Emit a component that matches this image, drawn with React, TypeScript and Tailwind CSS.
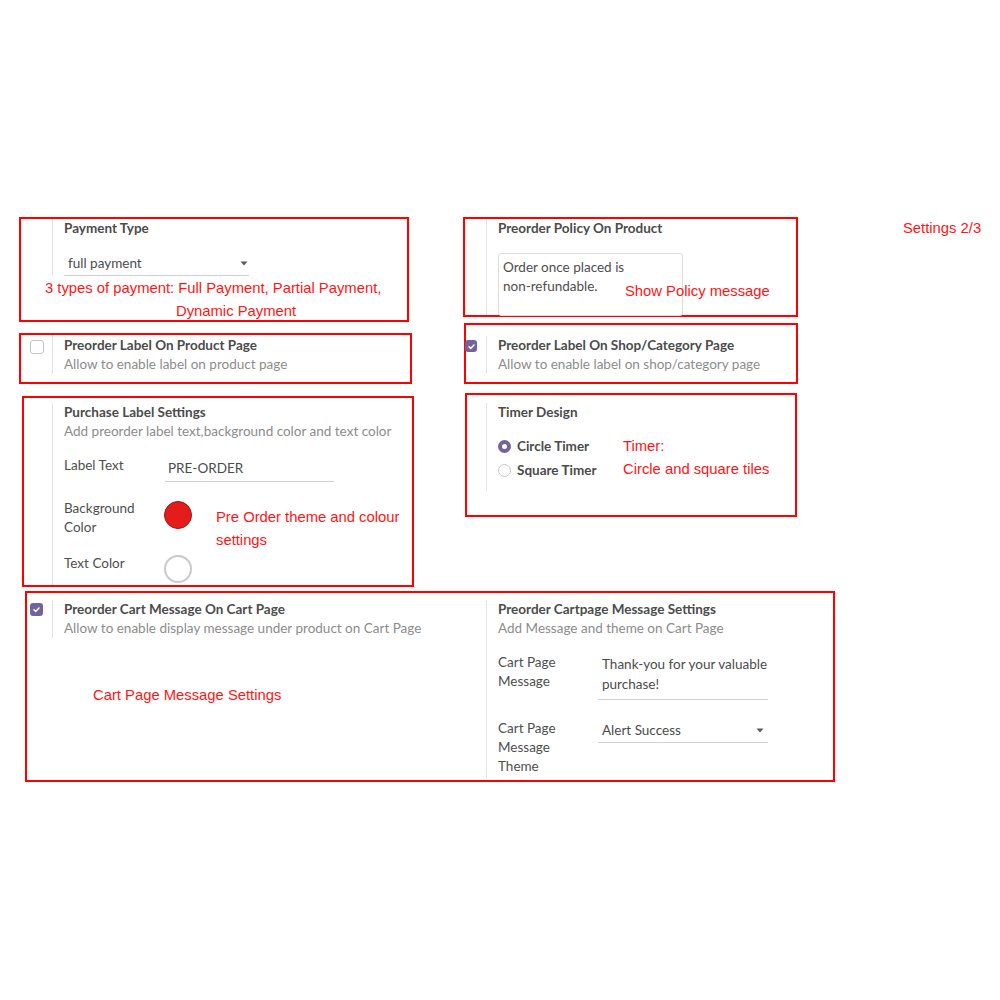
const title = 'text-[13.5px] leading-[19px] font-bold text-[#4b4b4b] whitespace-nowrap';
const desc = 'text-[13.5px] leading-[19px] text-[#8c8c8c] whitespace-nowrap';
const label = 'w-[82px] shrink-0 text-[13.5px] leading-[19px] text-[#4e4e4e]';
const note = "font-['Liberation_Sans',Arial,sans-serif] text-[14.8px] leading-[23px] text-[#ff1414] whitespace-nowrap";

function Caret() {
  return (
    <svg width="8" height="5" viewBox="0 0 8 5">
      <path d="M0.5 0.5h7L4 4.5z" fill="#5a5a5a" />
    </svg>
  );
}

function CheckBox({ checked, size = 13 }: { checked?: boolean; size?: number }) {
  if (!checked)
    return <div className="w-[14px] h-[14px] rounded-[3px] border border-[#c4c4c4] bg-white" />;
  return (
    <div
      className="rounded-[3px] bg-[#71639e] flex items-center justify-center"
      style={{ width: size, height: size }}
    >
      <svg width="9" height="9" viewBox="0 0 9 9">
        <path d="M2 4.7l1.7 1.7L7 3" stroke="#fff" strokeWidth="1.5" fill="none" strokeLinecap="round" strokeLinejoin="round" />
      </svg>
    </div>
  );
}

function Radio({ checked }: { checked?: boolean }) {
  return checked ? (
    <div className="w-[13px] h-[13px] rounded-full bg-[#71639e] flex items-center justify-center">
      <div className="w-[5px] h-[5px] rounded-full bg-white" />
    </div>
  ) : (
    <div className="w-[13px] h-[13px] rounded-full border border-[#c8c8c8] bg-white" />
  );
}

export default function App() {
  return (
    <div className="w-[1000px] min-h-[1000px] bg-white pt-[217px] font-['Lato',sans-serif]">
      {/* row 1 */}
      <div className="flex items-start">
        <div className="ml-[19px] w-[390px] h-[105px] border-2 border-[#ff0000] flex flex-col">
          <div className="flex">
            <div className="w-[31px] shrink-0" />
            <div className="border-l border-[#e3e3e3] pl-[11px]">
              <div className={title}>Payment Type</div>
              <div className="mt-[14px] w-[185px] h-[24px] border-b border-[#d2d2d2] flex items-center justify-between pl-[4px] pr-[1px] text-[13.5px] text-[#4b4b4b]">
                <span>full payment</span>
                <Caret />
              </div>
            </div>
          </div>
          <div className={`mt-px ${note}`}>
            <div className="pl-[24px]">3 types of payment: Full Payment, Partial Payment,</div>
            <div className="pl-[155px]">Dynamic Payment</div>
          </div>
        </div>

        <div className="relative ml-[54px] w-[335px] h-[100px] border-2 border-[#ff0000] flex">
          <div className="w-[21px] shrink-0" />
          <div className="border-l border-[#e3e3e3] pl-[11px] h-full">
            <div className={title}>Preorder Policy On Product</div>
            <div className="mt-[15px] w-[185px] h-[63px] border border-[#dcdcdc] rounded-[3px] px-[4px] pt-[4px] text-[13.5px] leading-[19px] text-[#4e4e4e]">
              Order once placed is
              <br />
              non-refundable.
            </div>
          </div>
          <div className={`absolute left-[160px] top-[61px] ${note}`}>Show Policy message</div>
        </div>

        <div className={`ml-[105px] ${note}`}>Settings 2/3</div>
      </div>

      {/* row 2 */}
      <div className="mt-px flex items-start">
        <div className="ml-[19px] mt-[10px] w-[393px] h-[51px] border-2 border-[#ff0000] flex">
          <div className="w-[31px] shrink-0 pl-[9px] pt-[5px]">
            <CheckBox />
          </div>
          <div className="border-l border-[#e3e3e3] pl-[11px] pt-px self-start">
            <div className={title}>Preorder Label On Product Page</div>
            <div className={desc}>Allow to enable label on product page</div>
          </div>
        </div>

        <div className="ml-[52px] w-[334px] h-[61px] border-2 border-[#ff0000] flex">
          <div className="relative z-10 w-[21px] shrink-0 -ml-px pt-[15px]">
            <CheckBox checked size={12} />
          </div>
          <div className="mt-[11px] border-l border-[#e3e3e3] pl-[11px] self-start">
            <div className={title}>Preorder Label On Shop/Category Page</div>
            <div className={desc}>Allow to enable label on shop/category page</div>
          </div>
        </div>
      </div>

      {/* row 3 */}
      <div className="mt-[9px] flex items-start">
        <div className="ml-[22px] mt-[3px] w-[392px] h-[191px] border-2 border-[#ff0000] flex">
          <div className="w-[28px] shrink-0" />
          <div className="mt-[5px] border-l border-[#e3e3e3] pl-[11px] flex-1">
            <div className={title}>Purchase Label Settings</div>
            <div className={desc}>Add preorder label text,background color and text color</div>

            <div className="mt-[15px] flex items-start">
              <div className={`${label} mr-[19px]`}>Label Text</div>
              <div className="w-[169px] h-[26px] border-b border-[#d2d2d2] pl-[3px] pt-[3px] text-[13.5px] leading-[19px] text-[#4b4b4b]">
                PRE-ORDER
              </div>
            </div>

            <div className="mt-[17px] flex items-start">
              <div className={`${label} mr-[18px]`}>Background Color</div>
              <div className="mt-[2px] w-[28px] h-[28px] rounded-full bg-[#e41c1c] border border-[#a31111]" />
              <div className={`ml-[24px] mt-[7px] ${note}`}>
                Pre Order theme and colour
                <br />
                settings
              </div>
            </div>

            <div className="mt-[2px] flex items-start">
              <div className={`${label} mr-[18px]`}>Text Color</div>
              <div className="mt-px w-[28px] h-[28px] rounded-full bg-white border-2 border-[#c9c9c9]" />
            </div>
          </div>
        </div>

        <div className="ml-[51px] w-[332px] h-[124px] border-2 border-[#ff0000] flex">
          <div className="w-[19px] shrink-0" />
          <div className="mt-[8px] border-l border-[#e3e3e3] pl-[11px] pb-[10px] self-start">
            <div className="text-[13.5px] leading-[19px] font-bold text-[#4b4b4b]">Timer Design</div>
            <div className="mt-[15px] flex items-start">
              <div className="w-[125px] flex flex-col gap-[5px]">
                <div className="flex items-center gap-[6px] text-[13.5px] leading-[19px] font-bold text-[#4b4b4b]">
                  <Radio checked />
                  Circle Timer
                </div>
                <div className="flex items-center gap-[6px] text-[13.5px] leading-[19px] font-bold text-[#4b4b4b]">
                  <Radio />
                  Square Timer
                </div>
              </div>
              <div className={`-mt-[2px] ${note}`}>
                Timer:
                <br />
                Circle and square tiles
              </div>
            </div>
          </div>
        </div>
      </div>

      {/* row 4 */}
      <div className="mt-[4px] ml-[25px] w-[810px] h-[191px] border-2 border-[#ff0000] flex items-start">
        <div className="w-[459px] shrink-0 flex flex-col">
          <div className="flex">
            <div className="w-[25px] shrink-0 pl-[3px] pt-[10px]">
              <CheckBox checked />
            </div>
            <div className="mt-[7px] border-l border-[#e3e3e3] pl-[11px]">
              <div className={title}>Preorder Cart Message On Cart Page</div>
              <div className={desc}>Allow to enable display message under product on Cart Page</div>
            </div>
          </div>
          <div className={`ml-[66px] mt-[46px] ${note}`}>Cart Page Message Settings</div>
        </div>

        <div className="mt-[7px] border-l border-[#e3e3e3] pl-[11px] pb-[2px]">
          <div className={title}>Preorder Cartpage Message Settings</div>
          <div className={desc}>Add Message and theme on Cart Page</div>

          <div className="mt-[15px] flex items-start">
            <div className={`${label} mr-[18px]`}>Cart Page Message</div>
            <div className="w-[170px] border-b border-[#d2d2d2] pl-[4px] pt-[1px] pb-[5px] text-[13.5px] leading-[20px] text-[#4b4b4b]">
              Thank-you for your valuable
              <br />
              purchase!
            </div>
          </div>

          <div className="mt-[19px] flex items-start">
            <div className={`${label} mr-[18px]`}>Cart Page Message Theme</div>
            <div className="w-[170px] h-[24px] border-b border-[#d2d2d2] flex items-center justify-between pl-[4px] pr-[4px] text-[13.5px] text-[#4b4b4b]">
              <span>Alert Success</span>
              <Caret />
            </div>
          </div>
        </div>
      </div>
    </div>
  );
}
